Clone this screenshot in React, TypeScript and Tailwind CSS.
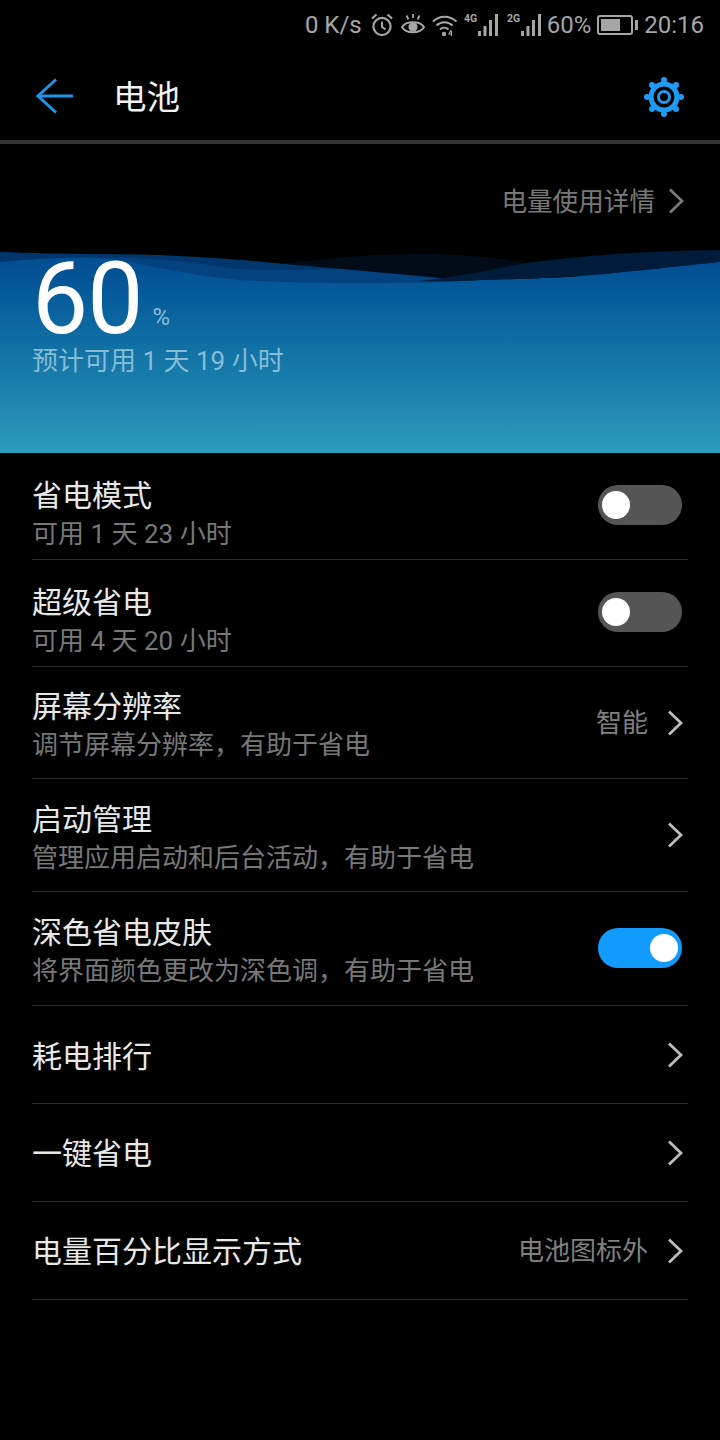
import React from "react";

const font = { fontFamily: '"Roboto", "Noto Sans CJK SC", sans-serif' };

function Chevron({ className = "text-[#bdbdbd]" }: { className?: string }) {
  return (
    <svg width="16" height="26" viewBox="0 0 16 26" fill="none" className={`shrink-0 ${className}`}>
      <path d="M2 1.5 L14 13 L2 24.5" stroke="currentColor" strokeWidth="2.8" />
    </svg>
  );
}

function Toggle({ on }: { on?: boolean }) {
  return (
    <div
      className={`w-[84px] h-[40px] rounded-full flex items-center px-[4px] ${
        on ? "bg-[#129bff] justify-end -mt-[1px]" : "bg-[#555555] justify-start -mt-[2px]"
      }`}
    >
      <div className="w-[28px] h-[28px] rounded-full bg-white" />
    </div>
  );
}

function Signal({ label }: { label: string }) {
  return (
    <svg width="36" height="24" viewBox="0 0 36 24" className="shrink-0">
      <text x="0" y="9" fontSize="10.5" fontWeight="700" fill="#a6a6a6" fontFamily="Roboto, sans-serif">
        {label}
      </text>
      <rect x="14" y="18" width="3" height="5" fill="#a6a6a6" />
      <rect x="19.5" y="13" width="3" height="10" fill="#a6a6a6" />
      <rect x="25" y="7" width="3" height="16" fill="#a6a6a6" />
      <rect x="31" y="1" width="3" height="22" fill="#a6a6a6" />
    </svg>
  );
}

function StatusBar() {
  return (
    <div className="h-[50px] flex items-center justify-end pr-[16px] text-[24px] leading-none text-[#a6a6a6]">
      <span className="mr-[9px]">0 K/s</span>
      {/* alarm */}
      <svg width="22" height="24" viewBox="0 0 22 24" fill="none" stroke="#a6a6a6" className="mr-[8px]">
        <circle cx="11" cy="13.5" r="8.6" strokeWidth="2.2" />
        <path d="M11 8.5 V14 L14.5 16.5" strokeWidth="2" />
        <path d="M1 5.5 L5.5 1.5 M21 5.5 L16.5 1.5" strokeWidth="2.2" />
      </svg>
      {/* eye comfort */}
      <svg width="24" height="24" viewBox="0 0 24 24" fill="none" stroke="#a6a6a6" className="mr-[7px]">
        <path d="M1 14 C5 7.5 19 7.5 23 14 C19 21 5 21 1 14 Z" strokeWidth="2" />
        <circle cx="12" cy="14" r="4.6" fill="#a6a6a6" stroke="none" />
        <path d="M12 1 V5 M5.5 2.5 L7.5 6.5 M18.5 2.5 L16.5 6.5" strokeWidth="1.8" />
      </svg>
      {/* wifi */}
      <svg width="26" height="24" viewBox="0 0 26 24" fill="none" stroke="#a6a6a6" className="mr-[6px]">
        <path d="M1 8.5 C7.5 2 17.5 2 24.5 8.5" strokeWidth="2" />
        <path d="M4.5 12.5 C9 8 16 8 20.5 12.5" strokeWidth="2" />
        <path d="M8 16.5 C10.5 14 14 14 16.5 16.5" strokeWidth="2" />
        <circle cx="12" cy="21" r="2.2" fill="#a6a6a6" stroke="none" />
        <path d="M19 17 L17 21 H20 M19.5 18 V23" strokeWidth="1.2" />
      </svg>
      <div className="mr-[7px]">
        <Signal label="4G" />
      </div>
      <Signal label="2G" />
      <span className="ml-[4px] mr-[6px]">60%</span>
      {/* battery */}
      <div className="flex items-center mr-[6px]">
        <div className="w-[36px] h-[20px] rounded-[3px] border-2 border-[#a6a6a6] p-[2px]">
          <div className="h-full w-[19px] bg-[#a6a6a6]" />
        </div>
        <div className="w-[3px] h-[10px] ml-[2px] bg-[#a6a6a6]" />
      </div>
      <span>20:16</span>
    </div>
  );
}

function Header() {
  return (
    <div className="h-[90px] flex items-center pl-[36px] pr-[36px]">
      <svg width="38" height="36" viewBox="0 0 38 36" fill="none" stroke="#1f94e6" strokeWidth="3" className="mt-[2px]">
        <path d="M20 1.5 L2 18 L20 34.5" />
        <path d="M2 18 H37" />
      </svg>
      <span className="ml-[39px] mt-[6px] text-[33.5px] leading-none text-[#f2f2f2]">电池</span>
      <svg width="42" height="42" viewBox="0 0 42 42" fill="none" stroke="#1e9bf5" className="ml-auto -mr-[1px] mt-[4px]">
        <circle cx="21" cy="21" r="13" strokeWidth="5" />
        <circle cx="21" cy="21" r="5.5" strokeWidth="3" />
        <g fill="#1e9bf5" stroke="none">
          <circle cx="21" cy="4" r="3" />
          <circle cx="21" cy="38" r="3" />
          <circle cx="4" cy="21" r="3" />
          <circle cx="38" cy="21" r="3" />
          <circle cx="9" cy="9" r="3" />
          <circle cx="33" cy="9" r="3" />
          <circle cx="9" cy="33" r="3" />
          <circle cx="33" cy="33" r="3" />
        </g>
      </svg>
    </div>
  );
}

function Banner() {
  return (
    <div className="relative h-[208px] bg-gradient-to-b from-[#034f94] from-10% to-[#2b9cba]">
      {/* wave layers, y values are page coordinates from 245 */}
      <svg className="absolute top-0 left-0" width="720" height="50" viewBox="0 245 720 50">
        <path
          d="M0 245 H720 V262 C680 266 640 271 580 276 C540 279 500 279 480 280 C440 283 390 283 340 283 C300 283 270 282 240 280 C200 276 170 270 130 262 C100 257 60 256 0 262 Z"
          fill="#03417f"
        />
        <path
          d="M0 250 H285 L340 269 C300 270 270 270 240 269 C200 264 170 259 130 258 C90 256 40 258 0 262 Z"
          fill="#00366c"
        />
        <path
          d="M285 264 L420 245 H540 V269 C555 272 570 274 580 276 C540 279 500 279 480 280 C460 281 450 279 440 278 C390 273 340 269 285 264 Z"
          fill="#020b18"
        />
        <path
          d="M420 281 C440 279 460 275 480 272 C495 269 510 266 526 263 L526 245 H720 V262 C680 266 640 271 580 276 C540 279 500 279 480 280 C460 281 440 282 420 281 Z"
          fill="#011c3a"
        />
        <path
          d="M0 245 H720 V250 C640 251 580 256 526 263 C490 257 460 254 420 254 C370 254 330 258 285 264 C230 258 160 254 100 254 C60 254 30 253 0 252 Z"
          fill="#000000"
        />
      </svg>
      <div className="relative pl-[32px] pt-[18px]">
        <div className="flex items-end h-[72px]">
          <span className="text-[100px] leading-[72px] text-white tracking-[-1px]">60</span>
          <span className="ml-[10px] mb-[6px] text-[24px] leading-none text-[#8dbbd6]">%</span>
        </div>
        <div className="mt-[12px] text-[26px] leading-[28px] text-[#86bcd6]">预计可用 1 天 19 小时</div>
      </div>
    </div>
  );
}

type RowProps = {
  title: string;
  sub?: string;
  value?: string;
  toggle?: "on" | "off";
  height: string;
  textPad: string;
};

function Row({ title, sub, value, toggle, height, textPad }: RowProps) {
  return (
    <div className={`${height} flex items-center justify-between border-b border-[#2b2b2b] pr-[6px]`}>
      <div className={`flex flex-col ${textPad}`}>
        <span className="text-[30px] leading-[38px] text-[#e8e8e8]">{title}</span>
        {sub && <span className="text-[26px] leading-[38px] text-[#787878]">{sub}</span>}
      </div>
      {toggle ? (
        <Toggle on={toggle === "on"} />
      ) : (
        <div className="flex items-center gap-[19px] -mr-[1px]">
          {value && <span className="text-[26px] leading-none text-[#808080]">{value}</span>}
          <Chevron />
        </div>
      )}
    </div>
  );
}

export default function App() {
  return (
    <div className="w-[720px] h-[1440px] bg-black overflow-hidden" style={font}>
      <StatusBar />
      <Header />
      <div className="h-[4px] bg-[#333333]" />
      <div className="h-[101px] flex items-center justify-end pr-[36px] gap-[13px] text-[25.6px] text-[#787878]">
        <span className="mt-[15px]">电量使用详情</span>
        <div className="mt-[13px]">
          <Chevron className="text-[#787878]" />
        </div>
      </div>
      <Banner />
      <div className="px-[32px]">
        <Row height="h-[107px]" textPad="pt-[18px]" title="省电模式" sub="可用 1 天 23 小时" toggle="off" />
        <Row height="h-[107px]" textPad="pt-[18px]" title="超级省电" sub="可用 4 天 20 小时" toggle="off" />
        <Row height="h-[112px]" textPad="pt-[6px]" title="屏幕分辨率" sub="调节屏幕分辨率，有助于省电" value="智能" />
        <Row height="h-[113px]" textPad="pt-[8px]" title="启动管理" sub="管理应用启动和后台活动，有助于省电" />
        <Row height="h-[114px]" textPad="pt-[6px]" title="深色省电皮肤" sub="将界面颜色更改为深色调，有助于省电" toggle="on" />
        <Row height="h-[98px]" textPad="pt-[4px]" title="耗电排行" />
        <Row height="h-[98px]" textPad="pt-[2px]" title="一键省电" />
        <Row height="h-[98px]" textPad="pt-[2px]" title="电量百分比显示方式" value="电池图标外" />
      </div>
    </div>
  );
}
